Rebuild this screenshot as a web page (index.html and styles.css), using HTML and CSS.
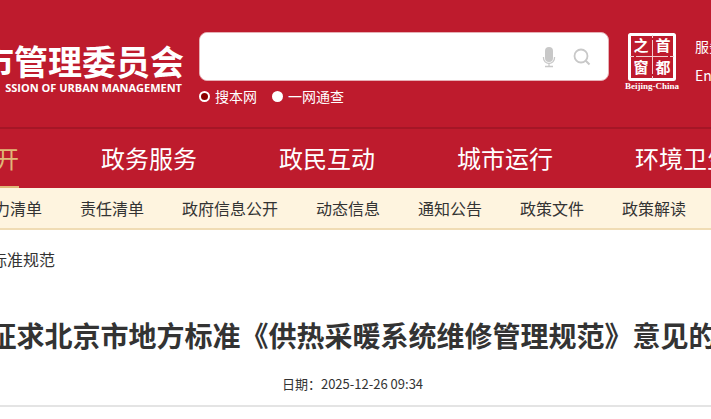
FILE: index.html
```html
<!DOCTYPE html>
<html lang="zh-CN">
<head>
  <meta charset="UTF-8">
  <meta name="viewport" content="width=device-width, initial-scale=1.0">
  <title>市管理委员会</title>
  <link rel="stylesheet" href="styles.css">
</head>
<body>
  <header class="header">
    <a class="logo" href="#">
      <span class="logo__name">市管理委员会</span>
      <span class="logo__en">SSION OF URBAN MANAGEMENT</span>
    </a>

    <form class="search">
      <div class="search__box">
        <input class="search__input" type="text" aria-label="搜索">
        <button class="search__button" type="button" aria-label="语音">
          <svg width="14" height="22" viewBox="0 0 14 22">
            <rect x="3" y="1" width="8" height="15" rx="4" fill="#c8c8c8"/>
            <path d="M1.500 11v1a5.500 5.500 0 0 0 11 0v-1M7 17v3M3 20.500h8" fill="none" stroke="#c8c8c8" stroke-width="1.300"/>
          </svg>
        </button>
        <button class="search__button" type="submit" aria-label="搜索">
          <svg width="18" height="18" viewBox="0 0 18 18">
            <circle cx="8" cy="8" r="6.500" fill="none" stroke="#c8c8c8" stroke-width="1.800"/>
            <path d="M12.500 12.500l4 4" stroke="#c8c8c8" stroke-width="2"/>
          </svg>
        </button>
      </div>
      <div class="search__scope">
        <label class="scope"><input class="scope__radio" type="radio" name="scope" checked>搜本网</label>
        <label class="scope"><input class="scope__radio" type="radio" name="scope">一网通查</label>
      </div>
    </form>

    <a class="seal" href="#">
      <svg class="seal__mark" width="50" height="50" viewBox="0 0 50 50">
        <rect x="2.500" y="2.500" width="45" height="45" rx="1" fill="none" stroke="#fff" stroke-width="3"/>
        <path d="M25.500 3v3M25.500 8v34M25.500 44v3M3 24.500h4M9 24.500h32M43 24.500h4" stroke="#f3ccd0" stroke-width="1"/>
        <text class="seal__char" x="14" y="19">之</text>
        <text class="seal__char" x="36" y="19">首</text>
        <text class="seal__char" x="14" y="41">窗</text>
        <text class="seal__char" x="36" y="41">都</text>
      </svg>
      <span class="seal__name">Beijing-China</span>
    </a>

    <div class="tools">
      <a href="#">服务</a>
      <a href="#">En</a>
    </div>
  </header>

  <nav class="nav">
    <a class="nav__item nav__item--active" href="#">开</a>
    <a class="nav__item" href="#">政务服务</a>
    <a class="nav__item" href="#">政民互动</a>
    <a class="nav__item" href="#">城市运行</a>
    <a class="nav__item" href="#">环境卫生</a>
  </nav>

  <nav class="subnav">
    <a href="#">力清单</a>
    <a href="#">责任清单</a>
    <a href="#">政府信息公开</a>
    <a href="#">动态信息</a>
    <a href="#">通知公告</a>
    <a href="#">政策文件</a>
    <a href="#">政策解读</a>
  </nav>

  <main>
    <div class="crumbs"><a href="#">标准规范</a></div>
    <article class="article">
      <h1 class="article__title">征求北京市地方标准《供热采暖系统维修管理规范》意见的</h1>
      <p class="article__date">日期：<time>2025-12-26 09:34</time></p>
    </article>
  </main>
</body>
</html>
```

FILE: styles.css
```css
* {
  box-sizing: border-box;
}

body {
  margin: 0;
  overflow: hidden;
  background: #fff;
  color: #333;
  font-family: "Noto Sans CJK SC", sans-serif;
  white-space: nowrap;
}

a {
  color: inherit;
  text-decoration: none;
}

/* Header */
.header {
  display: flex;
  align-items: flex-start;
  padding: 32px 0 21px;
  background: #be1b2d;
  border-bottom: 2px solid #a51626;
  color: #fff;
}

.logo {
  display: flex;
  flex: 0 0 184px;
  flex-direction: column;
  align-items: flex-end;
  min-width: 0;
  margin-right: 15px;
  padding-top: 10px;
}

.logo__name {
  font-size: 34px;
  font-weight: 700;
  line-height: 38px;
}

.logo__en {
  padding-right: 2px;
  font-family: "Open Sans", sans-serif;
  font-size: 11px;
  font-weight: 700;
  line-height: 16px;
}

.search {
  flex: 1 1 410px;
  max-width: 410px;
  margin-right: 16px;
}

.search__box {
  display: flex;
  align-items: center;
  height: 49px;
  padding-right: 17px;
  border: 1px solid #e6b0b5;
  border-radius: 8px;
  background: #fff;
}

.search__input {
  flex: 1;
  min-width: 0;
  height: 100%;
  padding: 0 12px;
  border: 0;
  border-radius: 8px;
  outline: 0;
  font-size: 16px;
}

.search__button {
  display: flex;
  margin-left: 17px;
  padding: 0;
  border: 0;
  background: none;
  cursor: pointer;
}

.search__scope {
  display: flex;
  gap: 15px;
  padding-top: 5px;
}

.scope {
  display: flex;
  align-items: center;
  gap: 5px;
  font-size: 14px;
  line-height: 20px;
}

.scope__radio {
  width: 11px;
  height: 11px;
  margin: 0;
  border-radius: 50%;
  appearance: none;
  background: #fff;
}

.scope__radio:checked {
  border: 2px solid #fff;
  background: #8b0000;
}

.seal {
  display: flex;
  flex: 0 0 54px;
  flex-direction: column;
  align-items: center;
  margin-right: 16px;
}

.seal__char {
  fill: #fff;
  font-family: "Noto Sans CJK SC", sans-serif;
  font-size: 15px;
  font-weight: 700;
  text-anchor: middle;
}

.seal__name {
  font-family: "Liberation Serif", serif;
  font-size: 9px;
  font-weight: 700;
  line-height: 8px;
}

.tools {
  display: flex;
  flex: none;
  flex-direction: column;
  width: 16px;
  font-size: 14px;
  line-height: 29px;
}

/* Navigation */
.nav {
  display: flex;
  gap: 82px;
  margin-left: -5px;
  background: #be1b2d;
  color: #fff;
}

.nav__item {
  flex: none;
  border-bottom: 2px solid transparent;
  font-size: 24px;
  line-height: 57px;
}

.nav__item--active {
  border-color: #e0b878;
  color: #e0b878;
}

.subnav {
  display: flex;
  gap: 38px;
  margin-left: -6px;
  border-bottom: 2px solid #f0dcb4;
  background: #fef4df;
  font-size: 16px;
  line-height: 40px;
}

.subnav a {
  flex: none;
}

/* Article */
.crumbs {
  margin-left: -9px;
  font-size: 16px;
  line-height: 58px;
}

.article {
  display: flex;
  flex-direction: column;
  align-items: center;
  padding: 27px 6px 11px 0;
  border-bottom: 2px solid #e4e4e4;
}

.article__title {
  margin: 0;
  font-size: 28px;
  font-weight: 700;
  line-height: 40px;
}

.article__date {
  margin: 19px 0 0;
  font-size: 13px;
  line-height: 20px;
}
```
